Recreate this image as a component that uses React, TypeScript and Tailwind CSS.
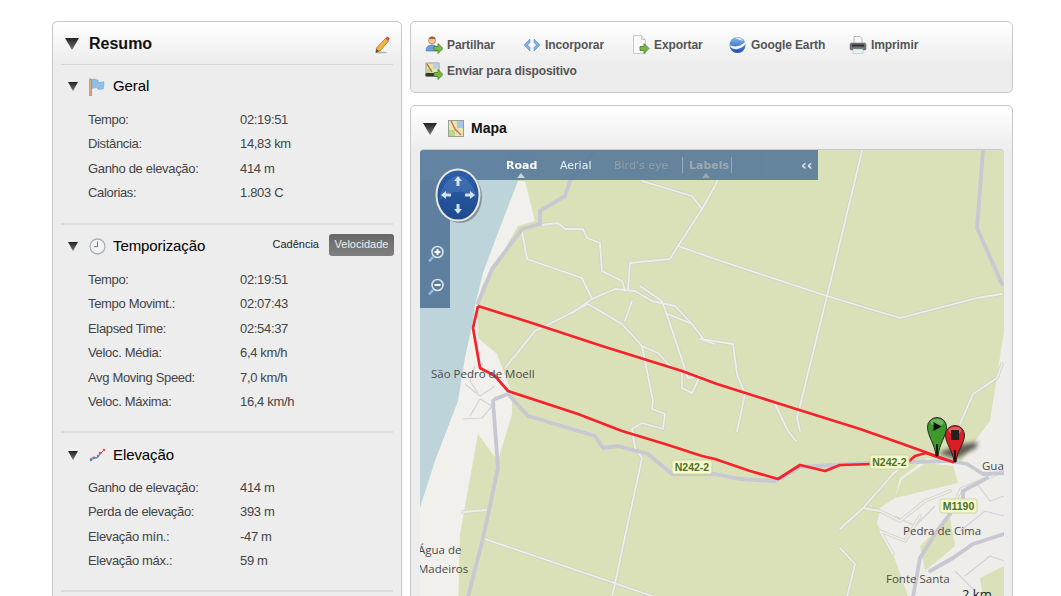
import React from "react";

const font = { fontFamily: '"Liberation Sans", Arial, sans-serif' };

function Tri({ big }: { big?: boolean }) {
  const id = big ? "triB" : "triS";
  return big ? (
    <svg width="14" height="12" viewBox="0 0 14 12" className="shrink-0">
      <defs><linearGradient id={id} x1="0" y1="0" x2="0" y2="1"><stop offset="0" stopColor="#222" /><stop offset="1" stopColor="#777" /></linearGradient></defs>
      <path d="M0 0H14L7 12Z" fill={`url(#${id})`} />
    </svg>
  ) : (
    <svg width="10" height="9" viewBox="0 0 10 9" className="shrink-0">
      <defs><linearGradient id={id} x1="0" y1="0" x2="0" y2="1"><stop offset="0" stopColor="#222" /><stop offset="1" stopColor="#777" /></linearGradient></defs>
      <path d="M0 0H10L5 9Z" fill={`url(#${id})`} />
    </svg>
  );
}

const Arrow = () => (
  <path d="M8 9.5h4V6.5l5 5-5 5v-3H8Z" fill="#7cb64a" stroke="#3f7f2a" strokeWidth="0.8" />
);

const icons: Record<string, React.ReactNode> = {
  flag: (
    <svg width="17" height="18" viewBox="0 0 17 18">
      <rect x="0.5" y="1" width="2.2" height="17" fill="#d9a878" stroke="#a8794e" strokeWidth="0.5" />
      <path d="M3 1.5c3-1.5 4 1 6 .5v2c2 .5 4 .5 6-.5l-.5 7c-2 1-4 1-6 .5v-1c-2-1-3.500 0-5.500.5Z" fill="#8dbfe8" stroke="#6a9fcc" strokeWidth="0.5" />
    </svg>
  ),
  clock: (
    <svg width="17" height="17" viewBox="0 0 17 17">
      <circle cx="8.500" cy="8.500" r="7.500" fill="#f3f3f3" stroke="#a9b0ba" strokeWidth="1.300" />
      <path d="M8.500 3.500v5.200h-3.500" fill="none" stroke="#777" strokeWidth="1" />
    </svg>
  ),
  elev: (
    <svg width="17" height="15" viewBox="0 0 17 15">
      <path d="M1 11l4-2 3 1 4-5 4-4" fill="none" stroke="#e45a5a" strokeWidth="1" />
      <path d="M1 13l4-3 3 0 3-4 2-1" fill="none" stroke="#5a86c8" strokeWidth="1" />
      <circle cx="5" cy="10" r="1.300" fill="#5a86c8" /><circle cx="9" cy="8" r="1.300" fill="#5a86c8" />
      <circle cx="15" cy="2" r="1.300" fill="#e45a5a" /><circle cx="2" cy="12" r="1.300" fill="#5a86c8" /><circle cx="11" cy="5" r="1.300" fill="#e45a5a" />
    </svg>
  ),
  share: (
    <svg width="18" height="18" viewBox="0 0 18 18">
      <circle cx="7" cy="4.500" r="3.500" fill="#eec39a" stroke="#a87040" strokeWidth="0.6" />
      <path d="M4 3c0-3 6-3.500 6.500 0-2 0-4.500 0-6.500 0Z" fill="#a0602e" />
      <path d="M1 15c0-4 2-6 6-6s5 2 5 6Z" fill="#6d9ed8" stroke="#3e70b0" strokeWidth="0.6" />
      <g transform="translate(1 1)"><Arrow /></g>
    </svg>
  ),
  embed: (
    <svg width="18" height="14" viewBox="0 0 18 14">
      <path d="M7 1 1 7l6 6V9.500L4.500 7 7 4.500Z" fill="#7fb0e6" stroke="#4d80bd" strokeWidth="0.5" />
      <path d="M11 1l6 6-6 6V9.500L13.500 7 11 4.500Z" fill="#7fb0e6" stroke="#4d80bd" strokeWidth="0.5" />
    </svg>
  ),
  doc: (
    <svg width="18" height="19" viewBox="0 0 18 19">
      <path d="M1.500 .5h8l4 4v14h-12Z" fill="#fafafa" stroke="#c8c8c8" />
      <path d="M9.500 .5v4h4" fill="#e6e6e6" stroke="#c8c8c8" />
      <g transform="translate(0 2)"><Arrow /></g>
    </svg>
  ),
  earth: (
    <svg width="17" height="18" viewBox="0 0 17 18">
      <defs><linearGradient id="earthG" x1="0" y1="0" x2="0" y2="1"><stop offset="0" stopColor="#8ab8ee" /><stop offset="1" stopColor="#1a4cb0" /></linearGradient></defs>
      <circle cx="8.500" cy="9" r="8" fill="url(#earthG)" />
      <path d="M1 9c5 3 11 1 15-3l.500 2C13 13 5 15 1.500 11Z" fill="#f2f6fc" />
      <path d="M6 2c3-1 7 0 8 3-3-1-5-1.500-8-3Z" fill="#e2ecfa" />
    </svg>
  ),
  print: (
    <svg width="18" height="18" viewBox="0 0 18 18">
      <path d="M5 .5h6l2 2v6H5Z" fill="#f8f8f8" stroke="#b5b5b5" />
      <rect x="1" y="7" width="16" height="7" rx="1.500" fill="#6f7278" stroke="#55585c" strokeWidth="0.5" />
      <rect x="3" y="8.500" width="12" height="2" fill="#2f3033" />
      <rect x="4" y="13" width="10" height="4.500" fill="#e8f1f4" stroke="#9db2bb" strokeWidth="0.5" />
    </svg>
  ),
  device: (
    <svg width="18" height="18" viewBox="0 0 18 18">
      <rect x="0.500" y="0.500" width="14" height="14" rx="1" fill="#999" />
      <rect x="0.500" y="11" width="14" height="3.500" rx="1" fill="#333" />
      <rect x="1.500" y="1.500" width="12" height="9.500" fill="#dfe6a8" />
      <rect x="8" y="1.500" width="5.500" height="5" fill="#b5cfee" />
      <rect x="1.500" y="7" width="4" height="4" fill="#b8d88a" />
      <path d="M2 2l5 8" stroke="#d84a3a" strokeWidth="1.200" />
      <g transform="translate(1 1)"><Arrow /></g>
    </svg>
  ),
  mapa: (
    <svg width="16" height="17" viewBox="0 0 16 17">
      <rect x="0.500" y="0.500" width="15" height="16" fill="#e4e8b4" stroke="#98a08c" />
      <rect x="9" y="1" width="6" height="7" fill="#a9c6e8" />
      <rect x="1" y="10" width="6" height="6" fill="#b8d88a" />
      <path d="M3 1l4 8 6 6" fill="none" stroke="#e2604a" strokeWidth="1.300" />
    </svg>
  ),
  pencil: (
    <svg width="15" height="19" viewBox="0 0 15 19">
      <ellipse cx="6" cy="17.500" rx="6" ry="1" fill="#bbb" />
      <path d="M10.500 3.500 13.500 6 5 16l-4 1.500L1.500 13Z" fill="#f2b544" stroke="#a86e1c" strokeWidth="0.8" />
      <path d="M1 17.500 1.500 14 4 16Z" fill="#444" />
      <path d="M10.500 3.500l1.200-1.500c1-.7 2.500.6 3 1.500L13.500 6Z" fill="#e04848" />
    </svg>
  ),
};

function Row({ label, value }: { label: string; value: string }) {
  return (
    <div className="flex h-[24.5px] items-center pl-[27px] text-[13px] tracking-[-0.33px] text-[#444]">
      <span className="w-[152px]">{label}</span>
      <span>{value}</span>
    </div>
  );
}

function Section({ icon, title, rows, right, head, pb }: { icon: string; title: string; rows: string[][]; right?: React.ReactNode; head: string; pb: string }) {
  return (
    <section className={`mx-[8px] border-b-2 border-[#dcdcdc] ${pb}`}>
      <div className={`flex items-center ${head}`}>
        <span className="ml-[7px] flex w-[21px]"><Tri /></span>
        <span className="flex w-[24px] items-center">{icons[icon]}</span>
        <h3 className="text-[15px] tracking-[-0.1px] text-black">{title}</h3>
        {right}
      </div>
      {rows.map((r) => <Row key={r[0]} label={r[0]} value={r[1]} />)}
    </section>
  );
}

function Tool({ icon, label, w }: { icon: string; label: string; w: string }) {
  return (
    <div className={`flex items-center ${w}`}>
      <span className="flex w-[22px] items-center">{icons[icon]}</span>
      <span className="text-[12px] font-bold tracking-[-0.1px] text-[#555]">{label}</span>
    </div>
  );
}

const minor: string[] = [
  "542,224 558,222 565,228 583,228 587,237 600,242 602,270 622,280 625,290",
  "522,230 527,258 582,277 592,298",
  "572,312 592,298 615,288 635,290 652,300 675,305 692,323 705,340 715,343",
  "628,288 630,262 670,258 678,245 702,208 715,185 730,150",
  "642,180 692,195 702,208",
  "678,245 715,258 827,295 900,317 977,297 1002,293",
  "862,150 827,295 797,417 800,430",
  "700,338 733,343 737,373 745,393 737,430",
  "775,403 788,430 796,440",
  "960,423 973,393 997,377 1002,363",
  "505,367 535,330 565,315 588,303 605,313 622,323 642,345 653,400 652,408 665,413 663,428 642,422 632,428 635,447 642,457 612,596",
  "625,320 632,300",
  "642,345 658,352 668,363 682,372 682,387 692,392 700,375 688,377 668,317 662,300 640,285",
  "668,313 692,323",
  "485,538 655,596",
  "463,511 487,509",
  "840,528 863,507 893,473 905,462",
  "863,507 880,510",
  "840,547 855,563 847,596",
  "950,513 961,488 1004,470",
  "880,510 900,520 925,500 950,490",
  "893,553 880,530 905,540 920,515",
];

const streets: string[] = [
  "465,383 480,395 495,385",
  "470,415 480,398 492,405 482,417 463,418",
  "475,365 470,380 478,392",
  "960,530 985,510 1004,515",
  "965,575 990,555 1004,560",
  "975,480 990,500 1004,495",
  "895,515 915,525 935,505",
  "955,570 975,590",
];

const major: string[] = [
  "595,149 570,180 565,195 540,210 540,223 522,228 492,268 478,302",
  "495,398 508,393 528,415 595,435 603,447 618,445 648,453 672,473 715,473 740,478 775,480 800,466 870,462 950,460 967,463 983,473 1004,472",
  "983,150 977,227 1002,283",
  "493,400 498,467 483,537 468,596",
  "913,596 920,557 937,530 950,513",
  "1004,533 973,543 953,557 930,570",
  "987,477 963,490 963,510",
];

const track = "478,305 532,322 602,345 682,370 717,383 777,402 860,428 900,442 953,461 940,457 926,452 915,455 907,462 840,464 825,470 800,464 778,478 750,470 715,458 702,455 665,443 622,430 578,413 508,390 495,375 480,367 473,327 478,305";

function Shield({ x, y, w, t }: { x: number; y: number; w: number; t: string }) {
  return (
    <g>
      <rect x={x} y={y} width={w} height={14} rx={2} fill="#f6f8cc" stroke="#cbd79e" />
      <text x={x + w / 2} y={y + 11} textAnchor="middle" fontSize="10.500" fontWeight="700" fill="#4c7026" style={font}>{t}</text>
    </g>
  );
}

function Pin({ cx, cy, tip, c, d }: { cx: number; cy: number; tip: number; c: string; d: string }) {
  const path = `M${cx - 9.5} ${cy} A9.500 9.500 0 0 1 ${cx + 9.5} ${cy} C${cx + 9.5} ${cy + 9} ${cx + 2} ${tip - 12} ${cx + 1} ${tip} H${cx - 1} C${cx - 2} ${tip - 12} ${cx - 9.5} ${cy + 9} ${cx - 9.5} ${cy} Z`;
  return (
    <g>
      <path d={path} fill={c} stroke="#1c1c1c" strokeWidth="0.9" />
      <ellipse cx={cx} cy={cy - 4.5} rx="6.500" ry="3.500" fill="#fff" opacity="0.28" />
      <rect x={cx - 0.9} y={tip - 12} width="1.800" height="12" fill="#111" />
      {d === "play" ? <path d={`M${cx - 3.5} ${cy - 5}l8 4.500-8 4.500Z`} fill="#111" /> : <rect x={cx - 4} y={cy - 5} width="8" height="10" fill="#222" />}
    </g>
  );
}

function MapArt() {
  const mapFont = { fontFamily: '"Open Sans", sans-serif' };
  return (
    <svg width="584" height="460" viewBox="420 149 584 460" className="block">
      <defs>
        <filter id="soft" x="-5%" y="-5%" width="110%" height="110%"><feGaussianBlur stdDeviation="0.45" /></filter>
        <filter id="shadow" x="-20%" y="-40%" width="140%" height="180%"><feGaussianBlur stdDeviation="2" /></filter>
      </defs>
      <g filter="url(#soft)">
        <rect x="420" y="149" width="584" height="460" fill="#dae0b7" />
        <path d="M540 149 518 180 498 232 483 272 475 305 473 320 465 357 458 400 435 460 420 507V149Z" fill="#bdd4da" />
        <path d="M525 180 535 220 518 225 495 265 482 285 477 305 478 337 497 353 512 393 512 413 498 460 478 433 460 533 458 609H420V507L435 460 458 400 465 357 473 320 475 305 483 272 498 232 518 180Z" fill="#f2f0ed" />
        <path d="M1004 330 990 420 975 440 962 460 927 457 900 477 895 497 880 507 877 523 893 553 913 609H1004Z" fill="#eeedea" />
        <path d="M926 462 953 465 958 482 895 497 902 478Z" fill="#dae0b7" />
        <path d="M920 545 950 517 955 545 925 570Z" fill="#dae0b7" />
        <path d="M980 577 1004 565V609H985Z" fill="#dae0b7" />
        {streets.map((p) => <polyline key={p} points={p} fill="none" stroke="#d2d3d8" strokeWidth="1.200" strokeLinejoin="round" />)}
        {minor.map((p) => <polyline key={p} points={p} fill="none" stroke="#d0d3c7" strokeWidth="3.400" strokeLinejoin="round" strokeLinecap="round" />)}
        {minor.map((p) => <polyline key={p + "i"} points={p} fill="none" stroke="#eeeee8" strokeWidth="1.800" strokeLinejoin="round" strokeLinecap="round" />)}
        {major.map((p) => <polyline key={p} points={p} fill="none" stroke="#c7c8d2" strokeWidth="3.800" strokeLinejoin="round" strokeLinecap="round" />)}
      </g>
      <polyline points={track} fill="none" stroke="#f5222b" strokeWidth="2.700" strokeLinejoin="round" />
      <Shield x={672} y={459} w={40} t="N242-2" />
      <Shield x={870} y={454} w={39} t="N242-2" />
      <Shield x={940} y={498} w={37} t="M1190" />
      <path d="M938 452 958 444 978 441 976 447 966 452 956 458Z" fill="#333" opacity="0.75" filter="url(#shadow)" />
      <Pin cx={937} cy={426} tip={455} c="#3e9a2c" d="play" />
      <Pin cx={955} cy={434} tip={461} c="#d81f26" d="stop" />
      <g style={mapFont} fontSize="11.500" fill="#4a4a4a">
        <text x="431" y="377">São Pedro de Moell</text>
        <text x="418" y="553">Água de</text>
        <text x="418" y="572">Madeiros</text>
        <text x="903" y="534">Pedra de Cima</text>
        <text x="886" y="582">Fonte Santa</text>
        <text x="982" y="469">Gua</text>
        <text x="962" y="598" fill="#222" fontSize="13">2 km</text>
      </g>
    </svg>
  );
}

function NavControl() {
  return (
    <svg width="50" height="58" viewBox="0 0 50 58" className="absolute left-[15px] top-[17px]">
      <defs>
        <linearGradient id="navG" x1="0" y1="0" x2="0" y2="1"><stop offset="0" stopColor="#2d5ea8" /><stop offset="1" stopColor="#1d4a8e" /></linearGradient>
      </defs>
      <ellipse cx="25" cy="30" rx="22" ry="26" fill="#333" opacity="0.4" />
      <ellipse cx="23" cy="28" rx="21.500" ry="25.500" fill="url(#navG)" stroke="#e8e8e0" strokeWidth="2" />
      <path d="M4 34c10-12 28-12 38-2-2-12-10-23-19-23S6 20 4 34Z" fill="#5a86c4" opacity="0.4" />
      <g fill="#d3e0ee">
        <path d="M23 9l4 5h-2.500v5h-3v-5H19Z" />
        <path d="M23 47l4-5h-2.500v-5h-3v5H19Z" />
        <path d="M6 28l5-4v2.500h5v3h-5V32Z" />
        <path d="M40 28l-5-4v2.500h-5v3h5V32Z" />
      </g>
    </svg>
  );
}

function Mag({ top, sign }: { top: string; sign: "+" | "-" }) {
  return (
    <svg width="16" height="18" viewBox="0 0 16 18" className={`absolute left-[8px] ${top}`}>
      <path d="M5 12 1 16.500" stroke="#8fc0e8" strokeWidth="2.500" />
      <circle cx="9.500" cy="7" r="5.500" fill="#5a7a99" stroke="#d6e4f0" strokeWidth="1.600" />
      <path d={sign === "+" ? "M6.500 7h6M9.500 4v6" : "M6.500 7h6"} stroke="#fff" strokeWidth="2" />
    </svg>
  );
}

export default function App() {
  return (
    <div className="h-[596px] w-[1061px] overflow-hidden bg-white" style={font}>
      <div className="flex items-start gap-[8px] pl-[52px] pt-[21px]">
        <aside className="w-[350px] rounded-t-[5px] border border-[#c8c8c8] bg-[#ededed] bg-gradient-to-b from-white from-0% to-[#ededed] to-[40px]">
          <header className="mx-[8px] flex h-[43px] items-center border-b border-[#d6d6d6] pr-[3px] pt-[2px]">
            <span className="ml-[4px] flex w-[24px]"><Tri big /></span>
            <h2 className="flex-1 text-[16px] font-bold text-[#111]">Resumo</h2>
            {icons.pencil}
          </header>
          <Section icon="flag" title="Geral" head="h-[42px] pt-[1px]" pb="pb-[18px]" rows={[["Tempo:", "02:19:51"], ["Distância:", "14,83 km"], ["Ganho de elevação:", "414 m"], ["Calorias:", "1.803 C"]]} />
          <Section
            icon="clock"
            title="Temporização"
            head="h-[42px] pt-[1px]"
            pb="pb-[17px]"
            right={
              <div className="ml-auto -mt-[4px] flex translate-x-px items-center text-[11px]">
                <span className="mr-[10px] text-[#222]">Cadência</span>
                <span className="flex h-[22px] w-[65px] items-center justify-center rounded-[3px] bg-gradient-to-b from-[#666] to-[#808080] text-[#eee]">Velocidade</span>
              </div>
            }
            rows={[["Tempo:", "02:19:51"], ["Tempo Movimt.:", "02:07:43"], ["Elapsed Time:", "02:54:37"], ["Veloc. Média:", "6,4 km/h"], ["Avg Moving Speed:", "7,0 km/h"], ["Veloc. Máxima:", "16,4 km/h"]]}
          />
          <Section icon="elev" title="Elevação" head="h-[42px] pt-[2px]" pb="pb-[17px]" rows={[["Ganho de elevação:", "414 m"], ["Perda de elevação:", "393 m"], ["Elevação mín.:", "-47 m"], ["Elevação máx.:", "59 m"]]} />
          <div className="h-[60px]" />
        </aside>

        <main className="flex w-[603px] flex-col gap-[12px]">
          <div className="h-[72px] rounded-[5px] border border-[#c8c8c8] bg-gradient-to-b from-white to-[#ededed] to-60% pl-[14px] pt-[9px]">
            <div className="flex h-[27px]">
              <Tool icon="share" label="Partilhar" w="w-[98px]" />
              <Tool icon="embed" label="Incorporar" w="w-[109px]" />
              <Tool icon="doc" label="Exportar" w="w-[97px]" />
              <Tool icon="earth" label="Google Earth" w="w-[120px]" />
              <Tool icon="print" label="Imprimir" w="w-[90px]" />
            </div>
            <div className="flex h-[26px]">
              <Tool icon="device" label="Enviar para dispositivo" w="w-[200px]" />
            </div>
          </div>
          <div className="rounded-t-[5px] border border-[#c8c8c8] bg-gradient-to-b from-white from-0% to-[#ededed] to-[44px] pl-[9px] pr-[8px]">
            <div className="flex h-[43px] items-center pt-[2px]">
              <span className="ml-[3px] flex w-[25px]"><Tri big /></span>
              <span className="flex w-[23px] items-center">{icons.mapa}</span>
              <h2 className="text-[14px] font-bold text-[#111]">Mapa</h2>
            </div>
            <div className="relative h-[460px] overflow-hidden rounded-t-[4px] border-t border-[#c8c8c8]">
              <MapArt />
              <div className="absolute left-0 top-0 h-[30px] w-[398px] bg-[#587a9b] opacity-90 text-[11px]" style={{ fontFamily: '"DejaVu Sans", sans-serif' }}>
                <span className="absolute left-[86px] top-[8px] font-bold text-white">Road</span>
                <span className="absolute left-[97px] top-[23px] h-0 w-0 border-x-[4px] border-b-[5px] border-x-transparent border-b-[#c8d6e4]" />
                <span className="absolute left-[140px] top-[8px] text-[#eef2f6]">Aerial</span>
                <span className="absolute left-[194px] top-[8px] text-[#8b98a6]">Bird's eye</span>
                <span className="absolute left-[262px] top-[7px] h-[16px] w-px bg-[#8fa5ba]" />
                <span className="absolute left-[269px] top-[8px] font-bold text-[#98a3ae]">Labels</span>
                <span className="absolute left-[282px] top-[23px] h-0 w-0 border-x-[4px] border-b-[5px] border-x-transparent border-b-[#98a3ae]" />
                <span className="absolute left-[311px] top-[7px] h-[16px] w-px bg-[#8fa5ba]" />
                <span className="absolute left-[381px] top-[5px] text-[14px] font-bold text-[#dfe7ee]">‹‹</span>
              </div>
              <div className="absolute left-0 top-[30px] h-[128px] w-[30px] bg-[#587a9b] opacity-95" />
              <NavControl />
              <Mag top="top-[95px]" sign="+" />
              <Mag top="top-[128px]" sign="-" />
            </div>
          </div>
        </main>
      </div>
    </div>
  );
}
